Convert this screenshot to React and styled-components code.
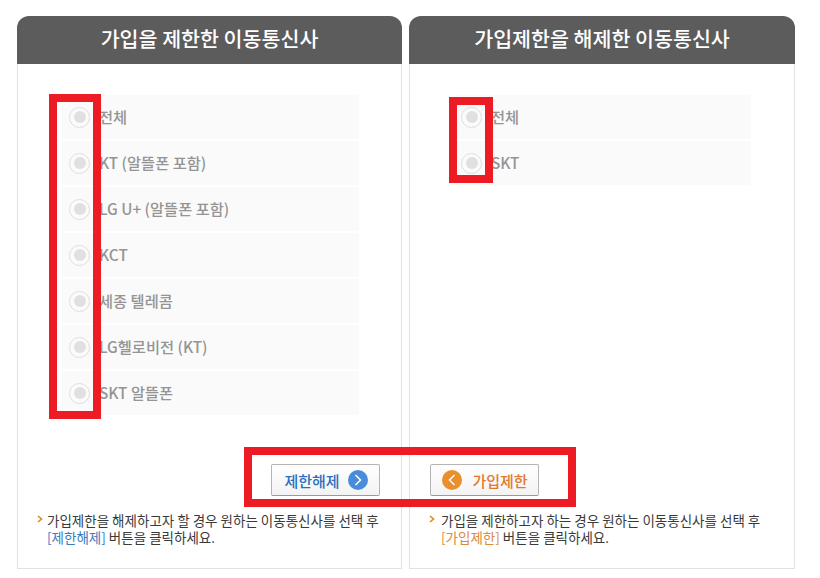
import React from "react";
import styled, { createGlobalStyle } from "styled-components";

const LEFT_ITEMS = ["전체", "KT (알뜰폰 포함)", "LG U+ (알뜰폰 포함)", "KCT", "세종 텔레콤", "LG헬로비전 (KT)", "SKT 알뜰폰"];
const RIGHT_ITEMS = ["전체", "SKT"];

const FONT = `"Noto Sans CJK KR", "Noto Sans", sans-serif`;

const Global = createGlobalStyle`
  html, body { margin: 0; padding: 0; background: #fff; }
  body { font-family: ${FONT}; width: 820px; height: 578px; overflow: hidden; }
`;

function Radio() {
  return (
    <RadioRing>
      <RadioDot />
    </RadioRing>
  );
}

function Arrow({ dir }) {
  return (
    <svg width="10" height="12" viewBox="0 0 10 12" fill="none" stroke="#fff" strokeWidth="1.5">
      <path d={dir === "right" ? "M2.5 1 L7.5 6 L2.5 11" : "M7.5 1 L2.5 6 L7.5 11"} />
    </svg>
  );
}

function Panel({ title, items, side, button, notice, tag, rest }) {
  return (
    <PanelRoot $side={side}>
      <PanelHead>{title}</PanelHead>
      <PanelBody>
        <List>
          {items.map((it) => (
            <Row key={it}>
              <Radio />
              <RowLabel>{it}</RowLabel>
            </Row>
          ))}
        </List>
        <ButtonRow $side={side}>{button}</ButtonRow>
        <Notice $side={side}>
          <Chevron $side={side}>
            <svg width="6" height="8" viewBox="0 0 6 8" fill="none" stroke="#d98a1f" strokeWidth="1.6">
              <path d="M1 1 L4.5 4 L1 7" />
            </svg>
          </Chevron>
          <NoticeText>
            {notice}
            <br />
            <Tag $side={side}>{tag}</Tag> {rest}
          </NoticeText>
        </Notice>
      </PanelBody>
    </PanelRoot>
  );
}

export default function App() {
  return (
    <>
      <Global />
      <Page>
        <Panel
          title="가입을 제한한 이동통신사"
          items={LEFT_ITEMS}
          side="left"
          notice="가입제한을 해제하고자 할 경우 원하는 이동통신사를 선택 후"
          tag="[제한해제]"
          rest="버튼을 클릭하세요."
          button={
            <ActionButton $color="#2a6ebd" $gap={8}>
              제한해제
              <ArrowCircle $bg="#4a8cdc"><Arrow dir="right" /></ArrowCircle>
            </ActionButton>
          }
        />
        <Panel
          title="가입제한을 해제한 이동통신사"
          items={RIGHT_ITEMS}
          side="right"
          notice="가입을 제한하고자 하는 경우 원하는 이동통신사를 선택 후"
          tag="[가입제한]"
          rest="버튼을 클릭하세요."
          button={
            <ActionButton $color="#e2782c" $gap={10}>
              <ArrowCircle $bg="#e98f2e"><Arrow dir="left" /></ArrowCircle>
              가입제한
            </ActionButton>
          }
        />
        <Marker $x={49} $y={94} $w={52} $h={325} />
        <Marker $x={449} $y={97} $w={44} $h={86} />
        <Marker $x={244} $y={447} $w={332} $h={60} />
      </Page>
    </>
  );
}

const Page = styled.div`
  position: relative;
  display: flex;
  gap: 7px;
  padding: 16px 0 0 17px;
  box-sizing: border-box;
  width: 820px;
  height: 578px;
`;

const PanelRoot = styled.section`
  width: ${(p) => (p.$side === "left" ? "385px" : "386px")};
  height: 553px;
  display: flex;
  flex-direction: column;
`;

const PanelHead = styled.h2`
  margin: 0;
  height: 48px;
  line-height: 44px;
  flex: none;
  text-align: center;
  background: #5c5c5c;
  color: #fff;
  border-radius: 12px 12px 0 0;
  font-size: 20.6px;
  font-weight: 500;
`;

const PanelBody = styled.div`
  flex: 1;
  min-height: 0;
  display: flex;
  flex-direction: column;
  box-sizing: border-box;
  border: 1px solid #e2e2e2;
  border-top: none;
  padding: 31px 0 0 44px;
`;

const List = styled.div`
  width: 297px;
  height: 336px;
  display: flex;
  flex-direction: column;
  gap: 2px;
`;

const Row = styled.div`
  height: 44px;
  display: flex;
  align-items: center;
  background: #fafafa;
  padding-left: 7px;
  flex: none;
`;

const RadioRing = styled.span`
  width: 21px;
  height: 21px;
  flex: none;
  box-sizing: border-box;
  border: 1px solid #dedede;
  border-radius: 50%;
  background: #fbfbfb;
  display: flex;
  align-items: center;
  justify-content: center;
`;

const RadioDot = styled.span`
  width: 12px;
  height: 12px;
  border-radius: 50%;
  background: #e0e0e0;
`;

const RowLabel = styled.span`
  margin-left: 9px;
  padding-bottom: 2px;
  font-size: 15.3px;
  font-weight: 500;
  color: #949494;
  line-height: 20px;
  white-space: nowrap;
`;

const ButtonRow = styled.div`
  display: flex;
  justify-content: ${(p) => (p.$side === "left" ? "flex-end" : "flex-start")};
  margin-left: ${(p) => (p.$side === "left" ? "0" : "-24px")};
  margin-right: 21px;
  margin-top: 33px;
`;

const ActionButton = styled.button`
  width: 109px;
  height: 32px;
  display: flex;
  align-items: center;
  justify-content: center;
  gap: ${(p) => p.$gap}px;
  padding: 0 0 0 1px;
  font-family: ${FONT};
  font-size: 15px;
  font-weight: 500;
  color: ${(p) => p.$color};
  background: linear-gradient(180deg, #ffffff 0%, #f3f3f3 100%);
  border: 1px solid #b5b5b5;
  border-bottom-color: #9a9a9a;
  border-radius: 2px;
`;

const ArrowCircle = styled.span`
  width: 20px;
  height: 20px;
  border-radius: 50%;
  background: ${(p) => p.$bg};
  display: flex;
  align-items: center;
  justify-content: center;
`;

const Notice = styled.div`
  display: flex;
  margin: 16px 0 0 -26px;
`;

const Chevron = styled.span`
  flex: none;
  box-sizing: border-box;
  padding-left: 1px;
  width: ${(p) => (p.$side === "left" ? "11px" : "13px")};
  height: 13px;
  display: flex;
  align-items: center;
`;

const NoticeText = styled.p`
  margin: 0;
  font-size: 13.5px;
  line-height: 17px;
  color: #3a3a3a;
  white-space: nowrap;
`;

const Tag = styled.span`
  color: ${(p) => (p.$side === "left" ? "#3a7cc0" : "#d98a3c")};
`;

const Marker = styled.div`
  position: absolute;
  left: ${(p) => p.$x}px;
  top: ${(p) => p.$y}px;
  width: ${(p) => p.$w}px;
  height: ${(p) => p.$h}px;
  box-sizing: border-box;
  border: 8px solid #ed1c24;
  pointer-events: none;
`;
